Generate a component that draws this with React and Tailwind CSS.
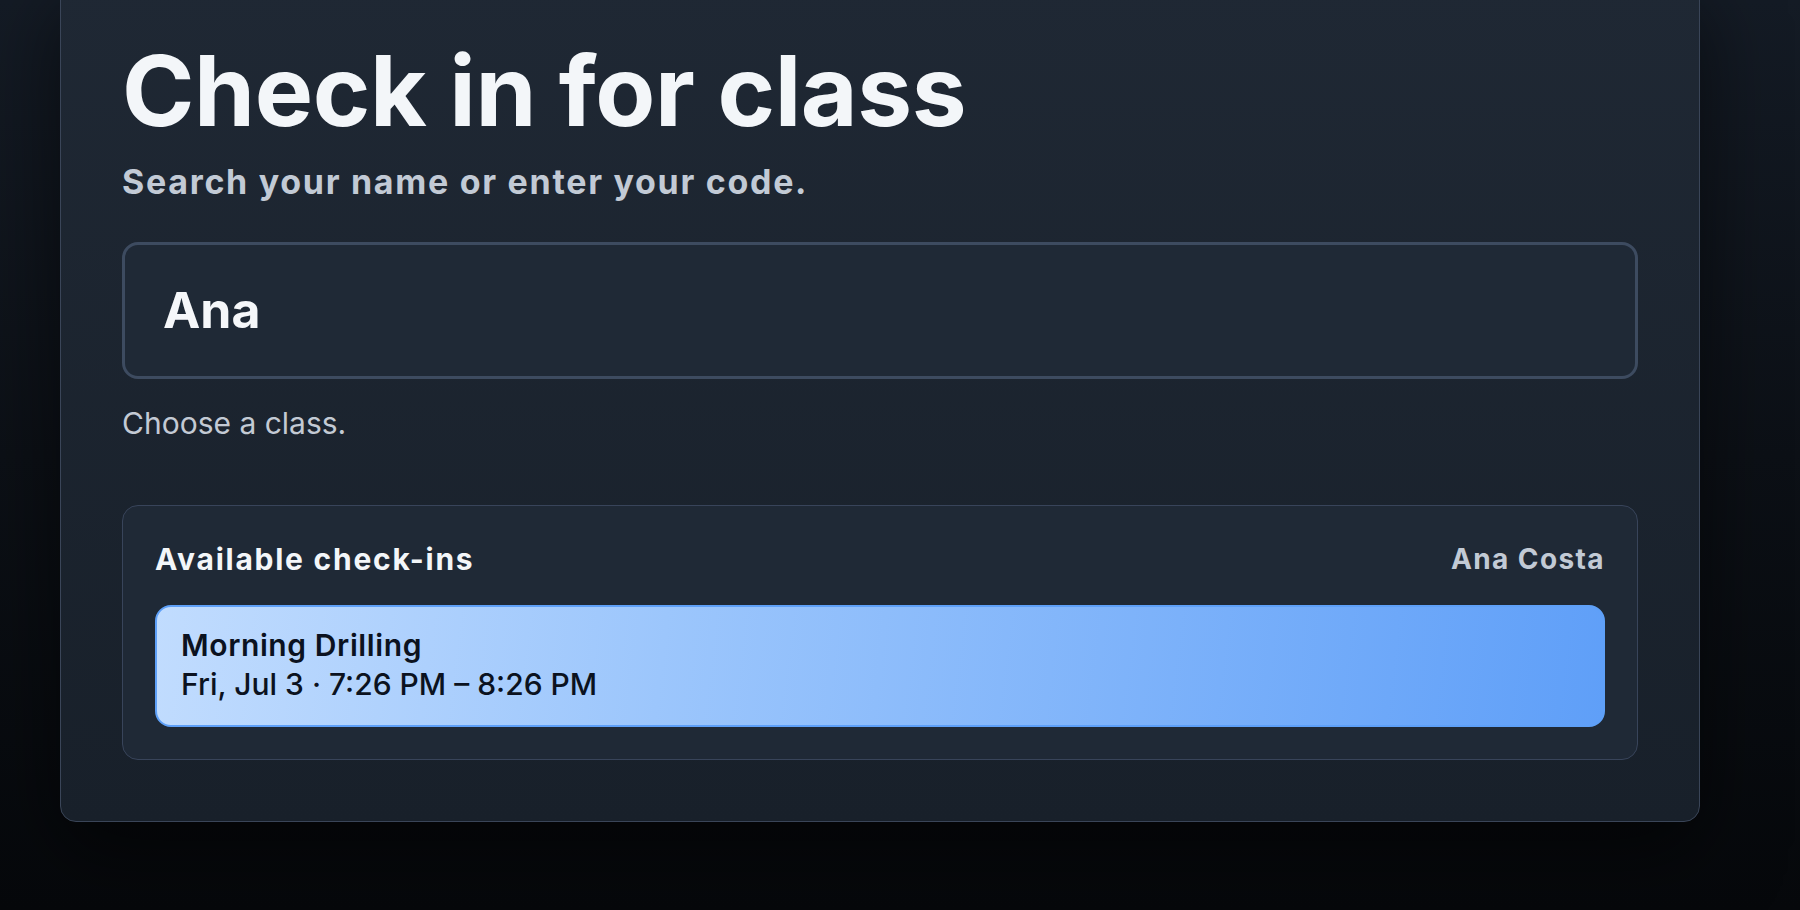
import React from "react";

const font = { fontFamily: "Inter, 'Noto Sans', 'Liberation Sans', sans-serif" };

function CheckInOption({ title, when }) {
  return (
    <button
      type="button"
      className="flex h-[122px] w-full flex-col items-start justify-center rounded-2xl border-2 border-[#5ea0f8] bg-[linear-gradient(97deg,#c1dcfe_0%,#9cc6fc_35%,#5f9ff8_100%)] px-6 pb-[3px] text-left text-[#0b1220]"
    >
      <span className="text-[30px] font-semibold leading-[39px] tracking-[0.02em]">{title}</span>
      <span className="text-[30px] font-medium leading-[39px]">{when}</span>
    </button>
  );
}

export default function App() {
  return (
    <div
      style={font}
      className="h-[910px] w-full overflow-hidden bg-gradient-to-b from-[#141b25] via-[#0c1016] to-[#06080b]"
    >
      <div className="-mt-5 ml-[60px] w-[1640px] rounded-2xl border border-[#3a4558] bg-gradient-to-b from-[#1f2834] to-[#18202a] px-[61px] pb-[61px] pt-[61px] shadow-[0_30px_80px_rgba(0,0,0,0.55)]">
        <h1 className="text-[98px] font-bold leading-none tracking-[-0.004em] text-[#f3f6f9]">
          Check in for class
        </h1>
        <p className="mt-[22px] text-[34px] font-bold leading-[40px] tracking-[0.05em] text-[#c2cad5]">
          Search your name or enter your code.
        </p>

        <div className="mt-10 flex h-[137px] items-center rounded-2xl border-[3px] border-[#3d4b60] bg-[#1f2936] px-[38px]">
          <span className="text-[50px] font-bold text-[#f5f7fa]">Ana</span>
        </div>

        <p className="mt-[26px] text-[30px] leading-[36px] text-[#c3cad4]">Choose a class.</p>

        <section className="mt-16 rounded-2xl border border-[#38445a] bg-[#1f2936] p-8">
          <div className="flex items-center justify-between">
            <h2 className="text-[30px] font-bold leading-[43px] tracking-[0.058em] text-[#f3f6f9]">
              Available check-ins
            </h2>
            <span className="text-[28px] font-bold leading-[43px] tracking-[0.05em] text-[#c2cad5]">
              Ana Costa
            </span>
          </div>
          <div className="mt-6">
            <CheckInOption title="Morning Drilling" when="Fri, Jul 3 · 7:26 PM – 8:26 PM" />
          </div>
        </section>
      </div>
    </div>
  );
}
